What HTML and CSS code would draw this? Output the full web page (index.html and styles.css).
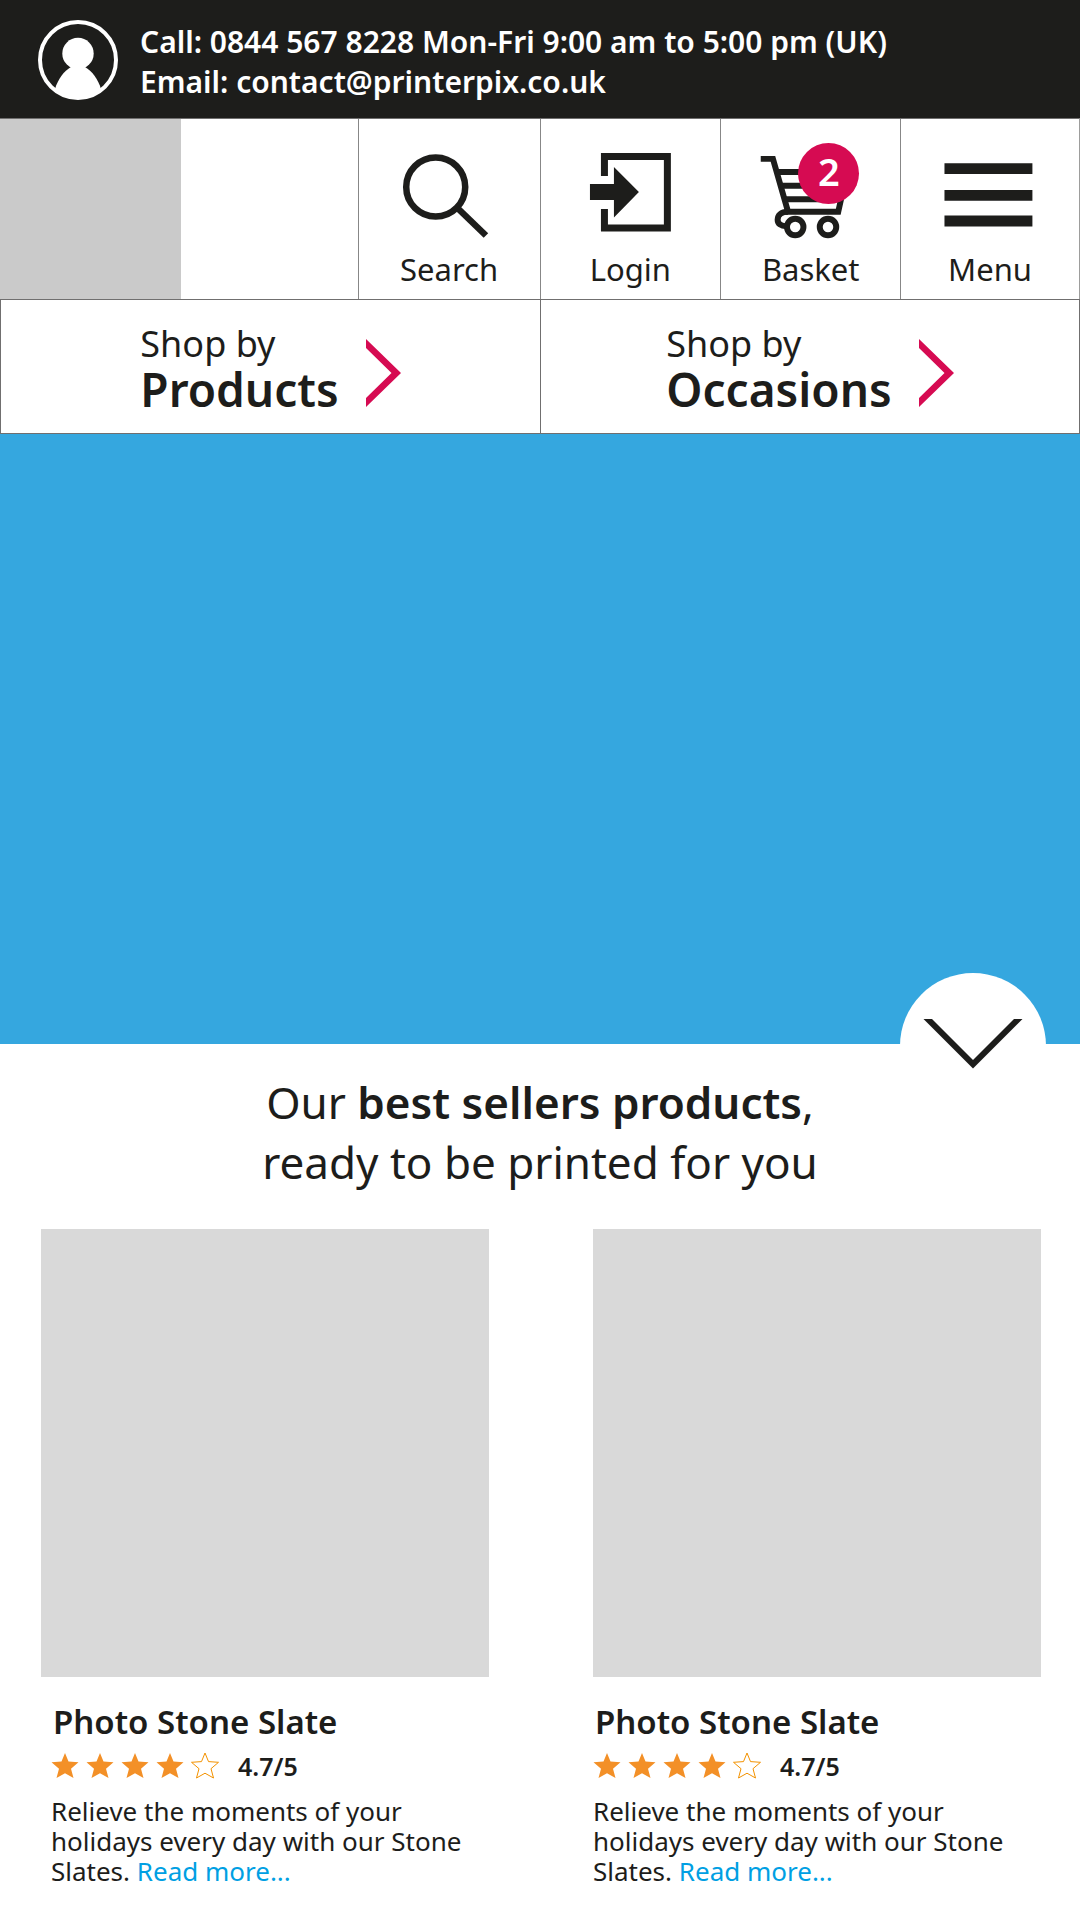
FILE: index.html
```html
<!DOCTYPE html>
<html lang="en">
<head>
  <meta charset="utf-8">
  <meta name="viewport" content="width=device-width, initial-scale=1">
  <title>Printerpix</title>
  <link rel="stylesheet" href="styles.css">
</head>
<body>
  <svg class="sprite" aria-hidden="true">
    <symbol id="star" viewBox="0 0 28 28">
      <path d="M14 1 17.500 9.600 27.500 10.300 20 16.700 22.500 26 14 21.200 5.500 26 8 16.700.5 10.300 10.500 9.600z"/>
    </symbol>
    <symbol id="arrow" viewBox="0 0 35 90">
      <path d="M0 15 35 49 0 83V74L25.500 49 0 24z" fill="#d60b52"/>
    </symbol>
  </svg>

  <header class="contact">
    <svg class="avatar" viewBox="0 0 80 80" aria-hidden="true">
      <circle cx="40" cy="40" r="38" fill="none" stroke="#fff" stroke-width="4"/>
      <circle cx="40" cy="33.500" r="15.700" fill="#fff"/>
      <path d="M33 47C26 51 20 59 17 69Q40 88 63 69C60 59 54 51 47 47z" fill="#fff"/>
    </svg>
    <div class="contact-lines">
      <p>Call: 0844 567 8228 Mon-Fri 9:00 am to 5:00 pm (UK)</p>
      <p>Email: <a href="mailto:contact@printerpix.co.uk">contact@printerpix.co.uk</a></p>
    </div>
  </header>

  <nav class="toolbar" aria-label="Account">
    <div class="brand"></div>
    <button class="tool" type="button">
      <svg class="tool-icon" viewBox="0 0 180 130" aria-hidden="true" fill="none" stroke="#1d1d1b" stroke-width="6.500">
        <circle cx="76.300" cy="68" r="29.500"/>
        <path d="M98 89 126.500 116.500"/>
      </svg>
      <span>Search</span>
    </button>
    <a class="tool" href="#login">
      <svg class="tool-icon" viewBox="0 0 180 130" aria-hidden="true">
        <path d="M63.500 57V37.500H126.500V109H63.500V90" fill="none" stroke="#1d1d1b" stroke-width="7"/>
        <path d="M49 65H73V48L98 73 73 98.500V81H49z" fill="#1d1d1b"/>
      </svg>
      <span>Login</span>
    </a>
    <a class="tool" href="#basket">
      <svg class="tool-icon" viewBox="0 0 180 130" aria-hidden="true" fill="none" stroke="#1d1d1b" stroke-width="6">
        <path d="M40 39.700H52.300L67.500 93H118L126 57"/>
        <path d="M56 53H126M60 66.700H123M64 80.300H121"/>
        <path d="M67.500 93C60 93 57 97 57 101C57 105 60 107.500 66 107.500"/>
        <circle cx="74.700" cy="108.300" r="8.300"/>
        <circle cx="107.700" cy="108.300" r="8.300"/>
      </svg>
      <span class="badge">2</span>
      <span>Basket</span>
    </a>
    <button class="tool" type="button">
      <svg class="tool-icon" viewBox="0 0 180 130" aria-hidden="true" fill="#1d1d1b">
        <path d="M44 44H133V55H44zM44 71H133V82H44zM44 97H133V108H44z"/>
      </svg>
      <span>Menu</span>
    </button>
  </nav>

  <nav class="shop" aria-label="Shop">
    <a class="shop-link" href="#products">
      <span class="shop-text">Shop by <strong>Products</strong></span>
      <svg class="shop-arrow" aria-hidden="true"><use href="#arrow"/></svg>
    </a>
    <a class="shop-link" href="#occasions">
      <span class="shop-text">Shop by <strong>Occasions</strong></span>
      <svg class="shop-arrow" aria-hidden="true"><use href="#arrow"/></svg>
    </a>
  </nav>

  <main>
    <section class="hero">
      <button class="scroll-down" type="button" aria-label="Scroll down">
        <svg viewBox="0 0 146 146" aria-hidden="true">
          <path d="M23.500 46H32L73 87 114 46H122.500L73 95.500z" fill="#1d1d1b"/>
        </svg>
      </button>
    </section>

    <h1 class="headline">Our <strong>best sellers products</strong>,<br>ready to be printed for you</h1>

    <section class="products">
      <article class="product">
        <div class="product-image"></div>
        <div class="product-info">
          <h2 class="product-name">Photo Stone Slate</h2>
          <div class="rating">
            <svg class="star"><use href="#star"/></svg>
            <svg class="star"><use href="#star"/></svg>
            <svg class="star"><use href="#star"/></svg>
            <svg class="star"><use href="#star"/></svg>
            <svg class="star star-empty"><use href="#star"/></svg>
            <span class="score">4.7/5</span>
          </div>
          <p class="product-text">Relieve the moments of your holidays every day with our Stone Slates. <a href="#slate-1">Read more...</a></p>
        </div>
      </article>
      <article class="product">
        <div class="product-image"></div>
        <div class="product-info">
          <h2 class="product-name">Photo Stone Slate</h2>
          <div class="rating">
            <svg class="star"><use href="#star"/></svg>
            <svg class="star"><use href="#star"/></svg>
            <svg class="star"><use href="#star"/></svg>
            <svg class="star"><use href="#star"/></svg>
            <svg class="star star-empty"><use href="#star"/></svg>
            <span class="score">4.7/5</span>
          </div>
          <p class="product-text">Relieve the moments of your holidays every day with our Stone Slates. <a href="#slate-2">Read more...</a></p>
        </div>
      </article>
    </section>
  </main>
</body>
</html>
```
FILE: styles.css
```css
* {
  box-sizing: border-box;
  margin: 0;
  padding: 0;
}

body {
  background: #fff;
  color: #1d1d1b;
  font-family: "Noto Sans", "Open Sans", sans-serif;
  font-size: 26px;
  line-height: 30px;
}

strong {
  font-weight: 600;
}

.sprite {
  display: block;
  width: 0;
  height: 0;
}

/* Contact bar */

.contact {
  display: flex;
  gap: 22px;
  padding: 20px 38px 18px;
  background: #1d1d1b;
  color: #fff;
  font-size: 30px;
  font-weight: 600;
  line-height: 40px;
}

.contact a {
  color: inherit;
  text-decoration: none;
}

.contact-lines {
  padding-top: 2px;
  margin-bottom: -2px;
}

.avatar {
  flex: none;
  width: 80px;
  height: 80px;
}

/* Toolbar */

.toolbar {
  display: grid;
  grid-template-columns: 358fr 182fr 181fr 180fr 179fr;
  border-top: 1px solid #706f6f;
  border-right: 1px solid #9d9d9c;
}

.brand {
  width: 181px;
  background: #cacaca;
}

.tool {
  position: relative;
  display: flex;
  flex-direction: column;
  align-items: center;
  padding-bottom: 10px;
  border: 0;
  border-left: 1px solid #878787;
  background: none;
  color: inherit;
  font-family: inherit;
  font-size: 31px;
  line-height: 40px;
  text-decoration: none;
}

.tool-icon {
  width: 100%;
  height: 130px;
}

.badge {
  position: absolute;
  top: 24px;
  left: 77px;
  width: 61px;
  height: 61px;
  border-radius: 50%;
  background: #d60b52;
  color: #fff;
  font-size: 38px;
  font-weight: 600;
  line-height: 56px;
  text-align: center;
}

/* Shop switcher */

.shop {
  display: grid;
  grid-template-columns: 1fr 1fr;
  border: 1px solid #706f6f;
}

.shop-link {
  display: flex;
  justify-content: center;
  gap: 27px;
  padding: 24px 0 19px;
  color: inherit;
  font-size: 36px;
  line-height: 40px;
  text-decoration: none;
}

.shop-link + .shop-link {
  border-left: 1px solid #706f6f;
}

.shop-text strong {
  display: block;
  font-size: 46px;
  line-height: 50px;
}

.shop-arrow {
  width: 35px;
  height: 90px;
}

/* Hero */

.hero {
  position: relative;
  aspect-ratio: 108 / 61;
  background: #35a7df;
}

.scroll-down {
  position: absolute;
  right: 34px;
  bottom: -75px;
  width: 146px;
  height: 146px;
  border: 0;
  border-radius: 50%;
  background: #fff;
}

.scroll-down svg {
  display: block;
}

.headline {
  padding: 28px 20px 37px;
  font-size: 44px;
  font-weight: 400;
  line-height: 60px;
  text-align: center;
}

/* Products */

.products {
  display: grid;
  grid-template-columns: 1fr 1fr;
  gap: 40px 104px;
  padding: 0 39px 32px 41px;
}

.product-image {
  aspect-ratio: 1;
  background: #d9d9d9;
}

.product-info {
  padding: 25px 0 0 10px;
}

.product:nth-child(even) .product-info {
  padding-left: 0;
}

.product-name {
  padding-left: 2px;
  font-size: 33px;
  font-weight: 600;
  line-height: 40px;
}

.rating {
  display: flex;
  align-items: center;
  gap: 7px;
  margin: 6px 0 12px;
}

.star {
  width: 28px;
  height: 28px;
  overflow: visible;
  fill: #f39027;
}

.star-empty {
  fill: none;
  stroke: #f39200;
}

.score {
  padding-left: 12px;
  font-size: 25px;
  font-weight: 600;
  line-height: 36px;
}

.product-text a {
  color: #009fe3;
  text-decoration: none;
}
```
